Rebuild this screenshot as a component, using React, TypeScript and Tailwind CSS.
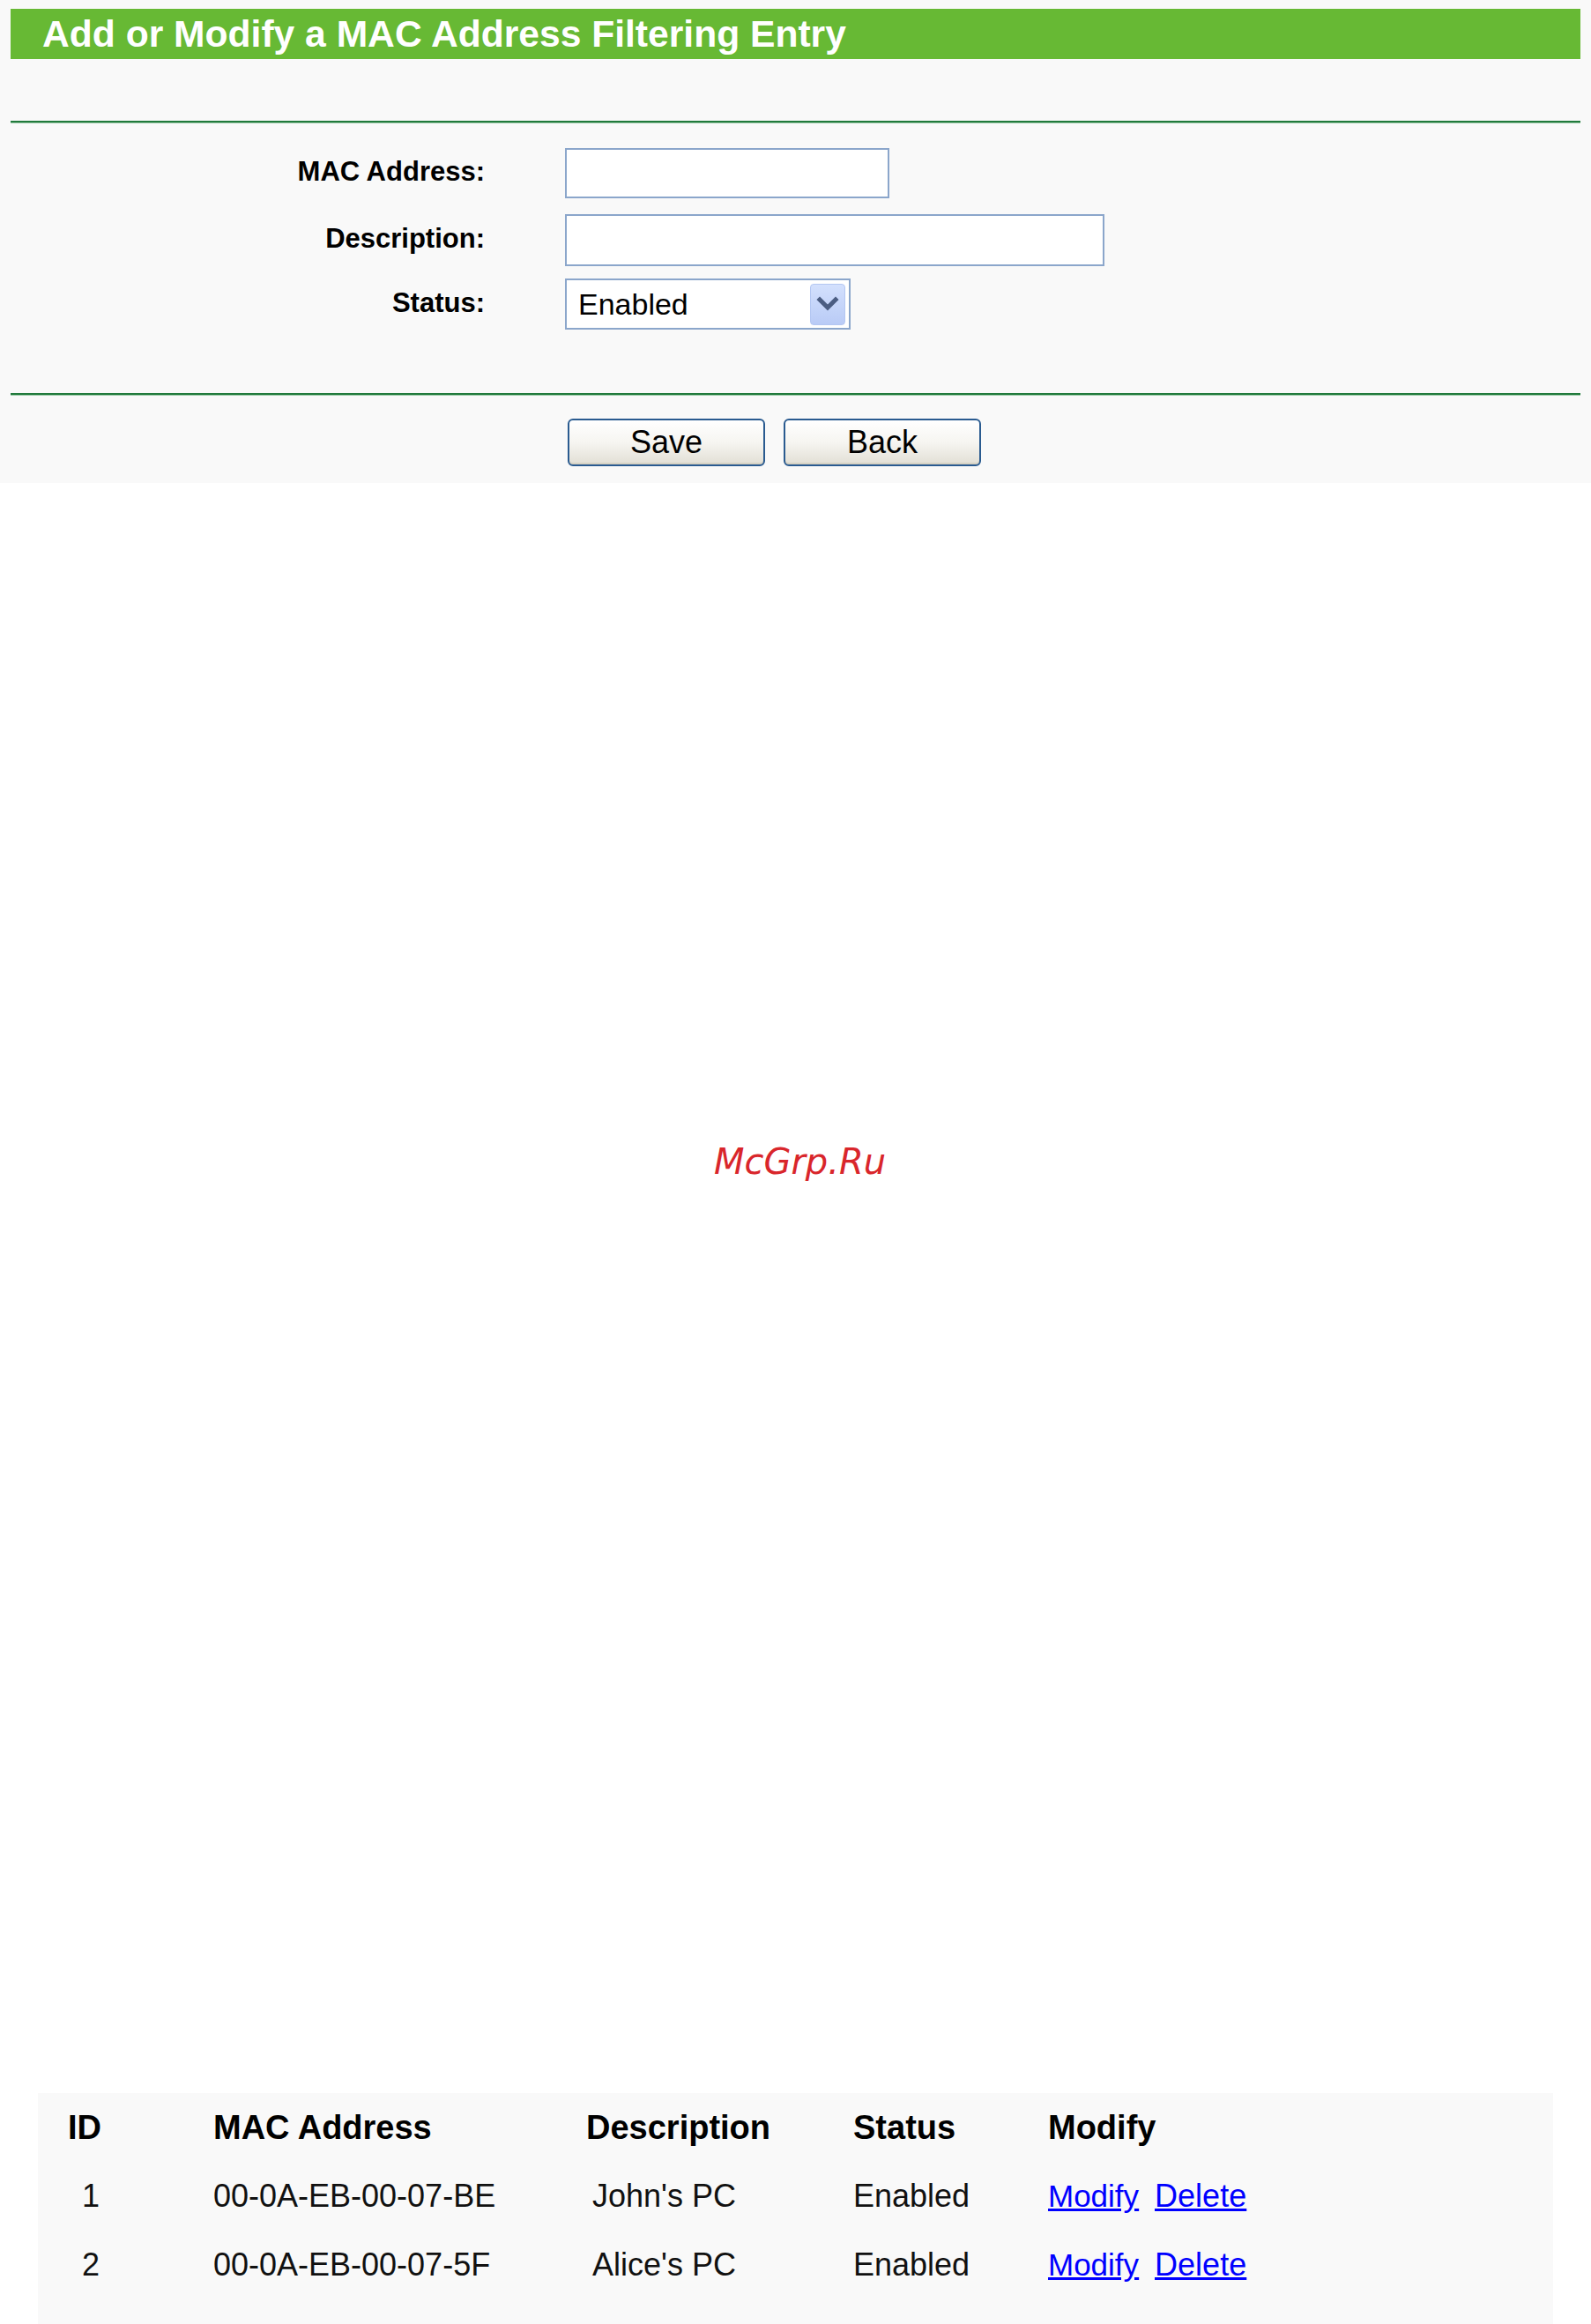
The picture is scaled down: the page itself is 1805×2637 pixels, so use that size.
import React from "react";

type Entry = { id: number; mac: string; desc: string; status: string };

const entries: Entry[] = [
  { id: 1, mac: "00-0A-EB-00-07-BE", desc: "John's PC", status: "Enabled" },
  { id: 2, mac: "00-0A-EB-00-07-5F", desc: "Alice's PC", status: "Enabled" },
];

function Rule() {
  return <div className="h-[3px] border-t-2 border-[#217a3c] bg-[#9ccaa9]" />;
}

function FormRow({
  label,
  height,
  className,
  children,
}: {
  label: string;
  height: string;
  className?: string;
  children: React.ReactNode;
}) {
  return (
    <div className={`flex items-center gap-[91px] ${height} ${className ?? ""}`}>
      <div className="w-[538px] pb-[4px] text-right text-[31px] font-bold leading-none">{label}</div>
      {children}
    </div>
  );
}

function PushButton({ label }: { label: string }) {
  return (
    <button
      type="button"
      className="flex h-[54px] w-[224px] items-center justify-center rounded-[6px] border-2 border-[#2a5b90] bg-gradient-to-b from-[#ffffff] via-[#f6f5f1] to-[#e2dfd5] text-[36px] leading-none text-black shadow-[inset_0_-2px_0_#d6d2c4]"
    >
      {label}
    </button>
  );
}

export default function App() {
  return (
    <div className="min-h-[2637px] w-[1805px] bg-white font-['Liberation_Sans',Arial,sans-serif] text-black">
      {/* edit form panel */}
      <section className="h-[548px] bg-[#f9f9f9] px-[12px] pt-[10px]">
        <div className="flex h-[57px] items-center bg-[#67b934] pl-[36px] text-[42.6px] font-bold leading-none text-white">
          Add or Modify a MAC Address Filtering Entry
        </div>
        <div className="mt-[70px]">
          <Rule />
        </div>

        <FormRow label="MAC Address:" height="h-[57px]" className="mt-[28px]">
          <input
            type="text"
            className="h-[57px] w-[368px] border-2 border-[#8ba6cb] bg-white outline-none"
          />
        </FormRow>
        <FormRow label="Description:" height="h-[59px]" className="mt-[18px]">
          <input
            type="text"
            className="h-[59px] w-[612px] border-2 border-[#8ba6cb] bg-white outline-none"
          />
        </FormRow>
        <FormRow label="Status:" height="h-[58px]" className="mt-[14px]">
          <div className="flex h-[58px] w-[324px] items-center justify-between border-2 border-[#8ba6cb] bg-white pl-[13px] pr-[4px]">
            <span className="text-[34px] leading-none">Enabled</span>
            <span className="flex h-[47px] w-[40px] items-center justify-center rounded-[4px] border border-[#b4c7f2] bg-gradient-to-b from-[#d3e0fd] to-[#b9cbf6]">
              <svg width="28" height="18" viewBox="0 0 28 18" aria-hidden="true">
                <polyline
                  points="5,4 14,13 23,4"
                  fill="none"
                  stroke="#4b5d82"
                  strokeWidth="5"
                  strokeLinecap="square"
                />
              </svg>
            </span>
          </div>
        </FormRow>

        <div className="mt-[72px]">
          <Rule />
        </div>
        <div className="mt-[26px] flex gap-[21px] pl-[632px]">
          <PushButton label="Save" />
          <PushButton label="Back" />
        </div>
      </section>

      {/* blank page body */}
      <div className="h-[1827px] pl-[10px] pt-[747px] text-center">
        <span className="font-['DejaVu_Sans',Verdana,sans-serif] text-[40px] italic leading-[47px] text-[#d9262b]">
          McGrp.Ru
        </span>
      </div>

      {/* filtering list */}
      <section className="mx-[43px] h-[262px] bg-[#f9f9f9] pl-[34px]">
        <div className="grid h-[78px] grid-cols-[165px_423px_303px_221px_1fr] items-center text-[38px] font-bold leading-none">
          <div>ID</div>
          <div>MAC Address</div>
          <div>Description</div>
          <div>Status</div>
          <div>Modify</div>
        </div>
        {entries.map((e) => (
          <div
            key={e.id}
            className="grid h-[78px] grid-cols-[165px_423px_303px_221px_1fr] items-center text-[36px] leading-none text-[#111]"
          >
            <div className="pl-[16px]">{e.id}</div>
            <div>{e.mac}</div>
            <div className="pl-[7px]">{e.desc}</div>
            <div>{e.status}</div>
            <div className="flex gap-[18px] text-[35px] text-[#0000ff] underline">
              <a href="#">Modify</a>
              <a href="#" className="text-[36px]">Delete</a>
            </div>
          </div>
        ))}
      </section>
    </div>
  );
}
